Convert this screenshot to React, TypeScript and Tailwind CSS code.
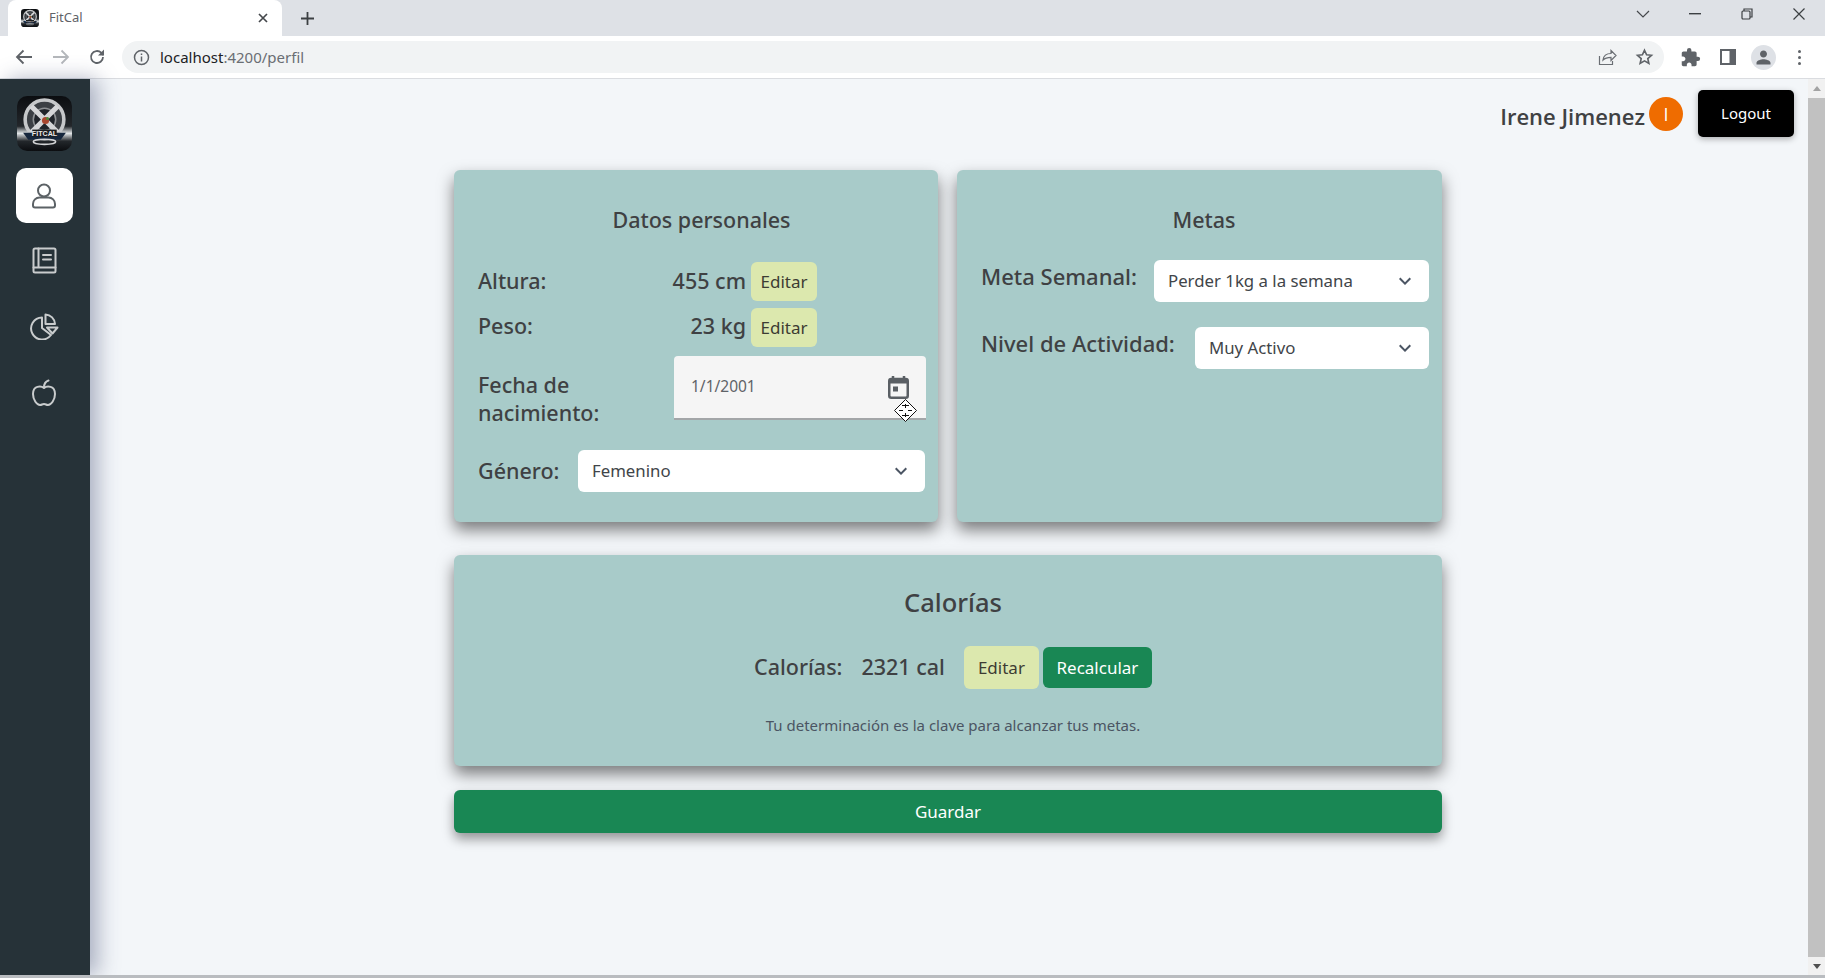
import { MdExtension, MdPerson, MdKeyboardArrowDown } from "react-icons/md";

const FONT = "font-['Noto_Sans','Open_Sans',sans-serif]";

function Logo({ size }: { size: number }) {
  return (
    <svg width={size} height={size} viewBox="0 0 54 54" className="shrink-0">
      <defs>
        <linearGradient id="logoBand" x1="0" y1="0" x2="0" y2="1">
          <stop offset="0" stopColor="#0b0d10" />
          <stop offset="0.55" stopColor="#23272b" />
          <stop offset="0.68" stopColor="#e4e8ea" />
          <stop offset="0.82" stopColor="#23272b" />
          <stop offset="1" stopColor="#0b0d10" />
        </linearGradient>
      </defs>
      <rect width="54" height="54" rx="10" fill="url(#logoBand)" />
      <circle cx="27" cy="23" r="19" fill="#3b3f44" stroke="#c6c8ca" strokeWidth="3.500" />
      <circle cx="27" cy="23" r="11" fill="#20242a" stroke="#8d9093" strokeWidth="1.500" />
      <path d="M14 10 40 36M40 10 14 36" stroke="#d5d6d8" strokeWidth="5" />
      <circle cx="28" cy="24" r="3.500" fill="#a8462f" />
      <circle cx="30" cy="22" r="1.500" fill="#4a8a3c" />
      <path d="M6 36h42l-5 7H11z" fill="#15263c" />
      <rect x="15" y="33" width="24" height="7" fill="#1b1d20" />
      <text x="27" y="39.500" textAnchor="middle" fontSize="7" fontWeight="700" fill="#e8e8e8" fontFamily="Liberation Sans, sans-serif">FITCAL</text>
      <ellipse cx="27" cy="45" rx="11" ry="2.500" fill="none" stroke="#d5d6d8" strokeWidth="1.500" />
    </svg>
  );
}

function ChromeBar() {
  return (
    <div className="shrink-0 bg-white">
      <div className="flex h-9 items-end bg-[#dee1e6] pl-2">
        <div className="flex h-[36px] w-[274px] items-center rounded-t-lg bg-white pl-[13px] pr-[13px]">
          <Logo size={18} />
          <span className="ml-[10px] flex-1 text-[13px] text-[#5f6368]">FitCal</span>
          <svg width="12" height="12" viewBox="0 0 12 12" stroke="#45484c" strokeWidth="1.700" fill="none"><path d="M2 2l8 8M10 2l-8 8" /></svg>
        </div>
        <div className="ml-[18px] mb-[4px] flex h-[28px] items-center">
          <svg width="15" height="15" viewBox="0 0 15 15" stroke="#3c4043" strokeWidth="1.800"><path d="M7.500 1v13M1 7.500h13" /></svg>
        </div>
        <div className="ml-auto flex h-[28px] items-center self-start">
          <svg width="16" height="10" viewBox="0 0 16 10" fill="none" stroke="#45484c" strokeWidth="1.200"><path d="M2 2l6 6 6-6" /></svg>
          <svg width="12" height="2" viewBox="0 0 12 2" className="ml-[38px]"><rect width="12" height="1.400" fill="#3c4043" /></svg>
          <svg width="12" height="12" viewBox="0 0 12 12" fill="none" stroke="#3c4043" strokeWidth="1.200" className="ml-[40px]"><path d="M3 3V1h8v8H9" /><rect x="1" y="3" width="8" height="8" rx="1" /></svg>
          <svg width="12" height="12" viewBox="0 0 12 12" fill="none" stroke="#3c4043" strokeWidth="1.200" className="ml-[40px] mr-[20px]"><path d="M.5.5l11 11M11.500.5l-11 11" /></svg>
        </div>
      </div>
      <div className="flex h-[43px] items-center border-b border-[#dadce0] pl-[15px]">
        <svg width="18" height="16" viewBox="0 0 18 16" fill="none" stroke="#5f6368" strokeWidth="1.800"><path d="M17 8H2M8.500 1.500 2 8l6.500 6.500" /></svg>
        <svg width="18" height="16" viewBox="0 0 18 16" fill="none" stroke="#b4b7bb" strokeWidth="1.800" className="ml-[19px]"><path d="M1 8h15M9.500 1.500 16 8l-6.500 6.500" /></svg>
        <svg width="18" height="18" viewBox="0 0 18 18" fill="none" stroke="#5f6368" strokeWidth="1.800" className="ml-[18px]"><path d="M15 9a6 6 0 1 1-1.800-4.300L15.500 7" /><path d="M16 1.500V7.500H10" fill="#5f6368" stroke="none" /></svg>
        <div className="ml-[16px] flex h-[32px] w-[1542px] items-center rounded-full bg-[#f1f3f4] pl-[11px] pr-[10px]">
          <svg width="17" height="17" viewBox="0 0 17 17" fill="none" stroke="#5f6368" strokeWidth="1.500"><circle cx="8.500" cy="8.500" r="7" /><path d="M8.500 7.500v5M8.500 4.500v1.500" /></svg>
          <span className="ml-[10px] flex-1 text-[15px] text-[#6a6e73]"><span className="text-[#202124]">localhost</span>:4200/perfil</span>
          <svg width="19" height="18" viewBox="0 0 19 18" fill="none" stroke="#6a6e73" strokeWidth="1.200"><path d="M1.500 8v8.500h13V13" /><path d="M5 12c.5-4 3.500-6.500 8-6.500V2.500l5 5-5 5V9.300c-3.500 0-6 .7-8 2.700z" /></svg>
          <svg width="19" height="18" viewBox="0 0 24 24" fill="none" stroke="#5f6368" strokeWidth="2.200" className="ml-[18px]"><path d="M12 3l2.800 6 6.500.7-4.900 4.400 1.400 6.400L12 17.200 6.200 20.500l1.400-6.400-4.900-4.400L9.200 9z" /></svg>
        </div>
        <MdExtension className="ml-[16px] text-[#5f6368]" size={21} />
        <svg width="16" height="16" viewBox="0 0 16 16" fill="none" className="ml-[19px]"><rect x="1" y="1" width="14" height="14" stroke="#5f6368" strokeWidth="2" /><rect x="9.500" y="1" width="5.500" height="14" fill="#5f6368" /></svg>
        <div className="ml-[15px] flex h-[25px] w-[25px] items-center justify-center rounded-full bg-[#dee1e6]">
          <MdPerson className="text-[#5f6368]" size={21} />
        </div>
        <div className="ml-[22px] flex flex-col gap-[3px]">
          <span className="h-[3px] w-[3px] rounded-full bg-[#5f6368]" />
          <span className="h-[3px] w-[3px] rounded-full bg-[#5f6368]" />
          <span className="h-[3px] w-[3px] rounded-full bg-[#5f6368]" />
        </div>
      </div>
    </div>
  );
}

function Sidebar() {
  const stroke = { fill: "none", stroke: "#c9cccd", strokeWidth: 2, strokeLinecap: "round", strokeLinejoin: "round" } as const;
  return (
    <aside className="z-10 flex w-[90px] shrink-0 flex-col items-center bg-[#263238] pr-[2px] shadow-[8px_0_20px_rgba(60,70,110,0.4)]">
      <div className="mt-[17px]"><Logo size={55} /></div>
      <div className="mt-[17px] flex h-[55px] w-[57px] items-center justify-center rounded-[10px] bg-white">
        <svg width="26" height="26" viewBox="0 0 26 26" fill="none" stroke="#5c6266" strokeWidth="2">
          <circle cx="13" cy="7.500" r="6" />
          <path d="M4 24.500c-1.500 0-2-.6-2-2v-1.500a6.500 6.500 0 0 1 6.500-6.500h9a6.500 6.500 0 0 1 6.500 6.500v1.500c0 1.400-.5 2-2 2z" />
        </svg>
      </div>
      <div className="mt-[24px] flex h-[26px] items-center">
        <svg width="25" height="27" viewBox="0 0 25 27" {...stroke}>
          <rect x="1.500" y="1.500" width="22" height="24" rx="1.500" />
          <path d="M6.500 1.500v19h17M6.500 20.500H1.500M11 8h8M11 12.500h8" />
        </svg>
      </div>
      <div className="mt-[40px] flex h-[26px] items-center">
        <svg width="29" height="27" viewBox="0 0 29 27" {...stroke}>
          <path d="M12 4.500a11 11 0 1 0 9 17.500L12 15z" />
          <path d="M15.500 1.500a10 10 0 0 1 9.500 9.500h-9.500z" />
          <path d="M17 14.500h10.500l-5 6z" />
        </svg>
      </div>
      <div className="mt-[40px] flex h-[26px] items-center">
        <svg width="26" height="27" viewBox="0 0 26 27" {...stroke}>
          <path d="M13 9c-3-2.500-11-2.500-11 6 0 6 4 11 7 11 2 0 2-1 4-1s2 1 4 1c3 0 7-5 7-11 0-8.500-8-8.500-11-6z" />
          <path d="M13 8.500c0-3 1.500-6 4.500-7" />
        </svg>
      </div>
    </aside>
  );
}

function Editar({ className = "" }: { className?: string }) {
  return (
    <button className={`rounded-[6px] bg-[#dce8ae] text-[17px] text-[#3c3c33] ${className}`}>Editar</button>
  );
}

function Select({ value, className = "" }: { value: string; className?: string }) {
  return (
    <div className={`flex h-[42px] items-center rounded-[6px] bg-white pl-[14px] pr-[12px] ${className}`}>
      <span className="flex-1 text-[16.800px] text-[#414549]">{value}</span>
      <MdKeyboardArrowDown className="text-[#4b5563]" size={24} />
    </div>
  );
}

function Card({ className = "", children }: { className?: string; children: React.ReactNode }) {
  return (
    <section className={`rounded-[6px] bg-[#a8cbc9] shadow-[0_8px_16px_rgba(0,0,0,0.5)] ${className}`}>{children}</section>
  );
}

const LABEL = "text-[21.500px] font-medium leading-[28px] text-[#3f4143]";
const META_LABEL = "text-[22px] font-medium leading-[28px] text-[#3f4143]";

function DatosPersonales() {
  return (
    <Card className="h-[352px] w-[484px] pl-6 pr-[13px] pt-[36px]">
      <h2 className="text-center text-[21.500px] font-medium leading-[27px] text-[#3f4143]">Datos personales</h2>
      <div className="mt-[29px] flex h-[39px] items-center">
        <span className={`${LABEL} flex-1 pb-px`}>Altura:</span>
        <span className={`${LABEL} mr-[5px] pb-px`}>455 cm</span>
        <Editar className="mr-[108px] h-[39px] w-[66px]" />
      </div>
      <div className="mt-[7px] flex h-[39px] items-center">
        <span className={`${LABEL} flex-1 pb-[3px]`}>Peso:</span>
        <span className={`${LABEL} mr-[5px] pb-[3px]`}>23 kg</span>
        <Editar className="mr-[108px] h-[39px] w-[66px]" />
      </div>
      <div className="mt-[9px] flex items-start">
        <div className={`${LABEL} mt-[15px] w-[196px]`}>Fecha de<br />nacimiento:</div>
        <div className="relative -mr-px flex h-[64px] flex-1 items-center rounded-t-[4px] border-b-2 border-[#a3a6a8] bg-[#f5f5f5] pl-[17px] pr-[17px]">
          <span className="flex-1 text-[15.500px] text-[#5f6368]">1/1/2001</span>
          <svg width="21" height="23" viewBox="0 0 21 23" fill="none">
            <path d="M5 0v4M16 0v4" stroke="#5a5f64" strokeWidth="2.500" />
            <rect x="1.250" y="3" width="18.500" height="18.750" rx="2" stroke="#5a5f64" strokeWidth="2.500" />
            <rect x="1.250" y="3" width="18.500" height="4.500" fill="#5a5f64" />
            <rect x="5" y="10.500" width="5" height="5" fill="#5a5f64" />
          </svg>
          {/* mouse pointer left over the field */}
          <svg width="23" height="23" viewBox="0 0 23 23" className="absolute right-[9px] top-[43px]" fill="#fff" stroke="#111" strokeWidth="1">
            <path d="M11.500.5 22.500 11.500 11.500 22.500.5 11.500z" />
            <path d="M11.500 5v4M11.500 14v4M5 11.500h4M14 11.500h4M8 6.500h7M8 16.500h7" fill="none" />
          </svg>
        </div>
      </div>
      <div className="mt-[23px] flex items-center">
        <span className={`${LABEL} w-[100px]`}>Género:</span>
        <Select value="Femenino" className="flex-1" />
      </div>
    </Card>
  );
}

function Metas() {
  return (
    <Card className="h-[352px] w-[485px] pl-6 pr-[13px] pt-[36px]">
      <h2 className="pr-[2px] text-center text-[21.500px] font-medium leading-[27px] text-[#3f4143]">Metas</h2>
      <div className="mt-[27px] flex items-start justify-between">
        <span className={`${META_LABEL} mt-[2px]`}>Meta Semanal:</span>
        <Select value="Perder 1kg a la semana" className="w-[275px]" />
      </div>
      <div className="mt-[25px] flex items-start justify-between">
        <span className={`${META_LABEL} mt-[2px]`}>Nivel de Actividad:</span>
        <Select value="Muy Activo" className="w-[234px]" />
      </div>
    </Card>
  );
}

function Calorias() {
  return (
    <Card className="mt-[33px] flex h-[211px] w-[988px] flex-col items-center pl-[10px] pt-[31px]">
      <h2 className="text-[25.500px] font-medium leading-[32px] text-[#3f4143]">Calorías</h2>
      <div className="mt-[28px] flex h-[43px] items-center">
        <span className={`${LABEL} pb-[2px]`}>Calorías:</span>
        <span className={`${LABEL} ml-[19px] pb-[2px]`}>2321 cal</span>
        <Editar className="ml-[19px] h-[43px] w-[75px]" />
        <button className="ml-[4px] h-[41px] w-[109px] rounded-[6px] bg-[#198754] text-[17px] text-white">Recalcular</button>
      </div>
      <p className="mt-[26px] text-[15px] leading-[20px] text-[#4b5563]">Tu determinación es la clave para alcanzar tus metas.</p>
    </Card>
  );
}

export default function App() {
  return (
    <div className={`flex h-screen flex-col overflow-hidden border-b-[3px] border-[#b9bcc0] bg-[#f3f6f9] ${FONT}`}>
      <ChromeBar />
      <div className="flex min-h-0 flex-1">
        <Sidebar />
        <main className="min-w-0 flex-1 pr-[2px]">
          <header className="flex h-[91px] items-start justify-end pr-[12px] pt-[11px]">
            <span className="mt-[13px] font-['Open_Sans',sans-serif] text-[22px] font-semibold leading-[27px] text-[#3f4143]">Irene Jimenez</span>
            <span className="ml-[4px] mt-[7px] flex h-[34px] w-[34px] items-center justify-center rounded-full bg-[#ef6c00] font-['Open_Sans',sans-serif] text-[18px] text-white">I</span>
            <button className="ml-[15px] h-[47px] w-[96px] rounded-[5px] bg-black text-[15px] text-white shadow-[0_2px_6px_rgba(0,0,0,0.3)]">Logout</button>
          </header>
          <div className="mx-auto w-[988px]">
            <div className="flex gap-[19px]">
              <DatosPersonales />
              <Metas />
            </div>
            <Calorias />
            <button className="relative mt-[24px] h-[43px] w-full rounded-[6px] bg-[#198754] text-[17px] text-white shadow-[0_6px_12px_rgba(0,0,0,0.4)]">Guardar</button>
          </div>
        </main>
        <div className="flex w-[17px] shrink-0 flex-col bg-[#f1f1f1]">
          <div className="flex h-[19px] items-center justify-center">
            <span className="border-x-[4px] border-b-[5px] border-x-transparent border-b-[#a3a3a3]" />
          </div>
          <div className="min-h-0 flex-1 bg-[#c1c1c1]" />
          <div className="flex h-[18px] items-center justify-center">
            <span className="border-x-[4px] border-t-[5px] border-x-transparent border-t-[#505050]" />
          </div>
        </div>
      </div>
    </div>
  );
}
